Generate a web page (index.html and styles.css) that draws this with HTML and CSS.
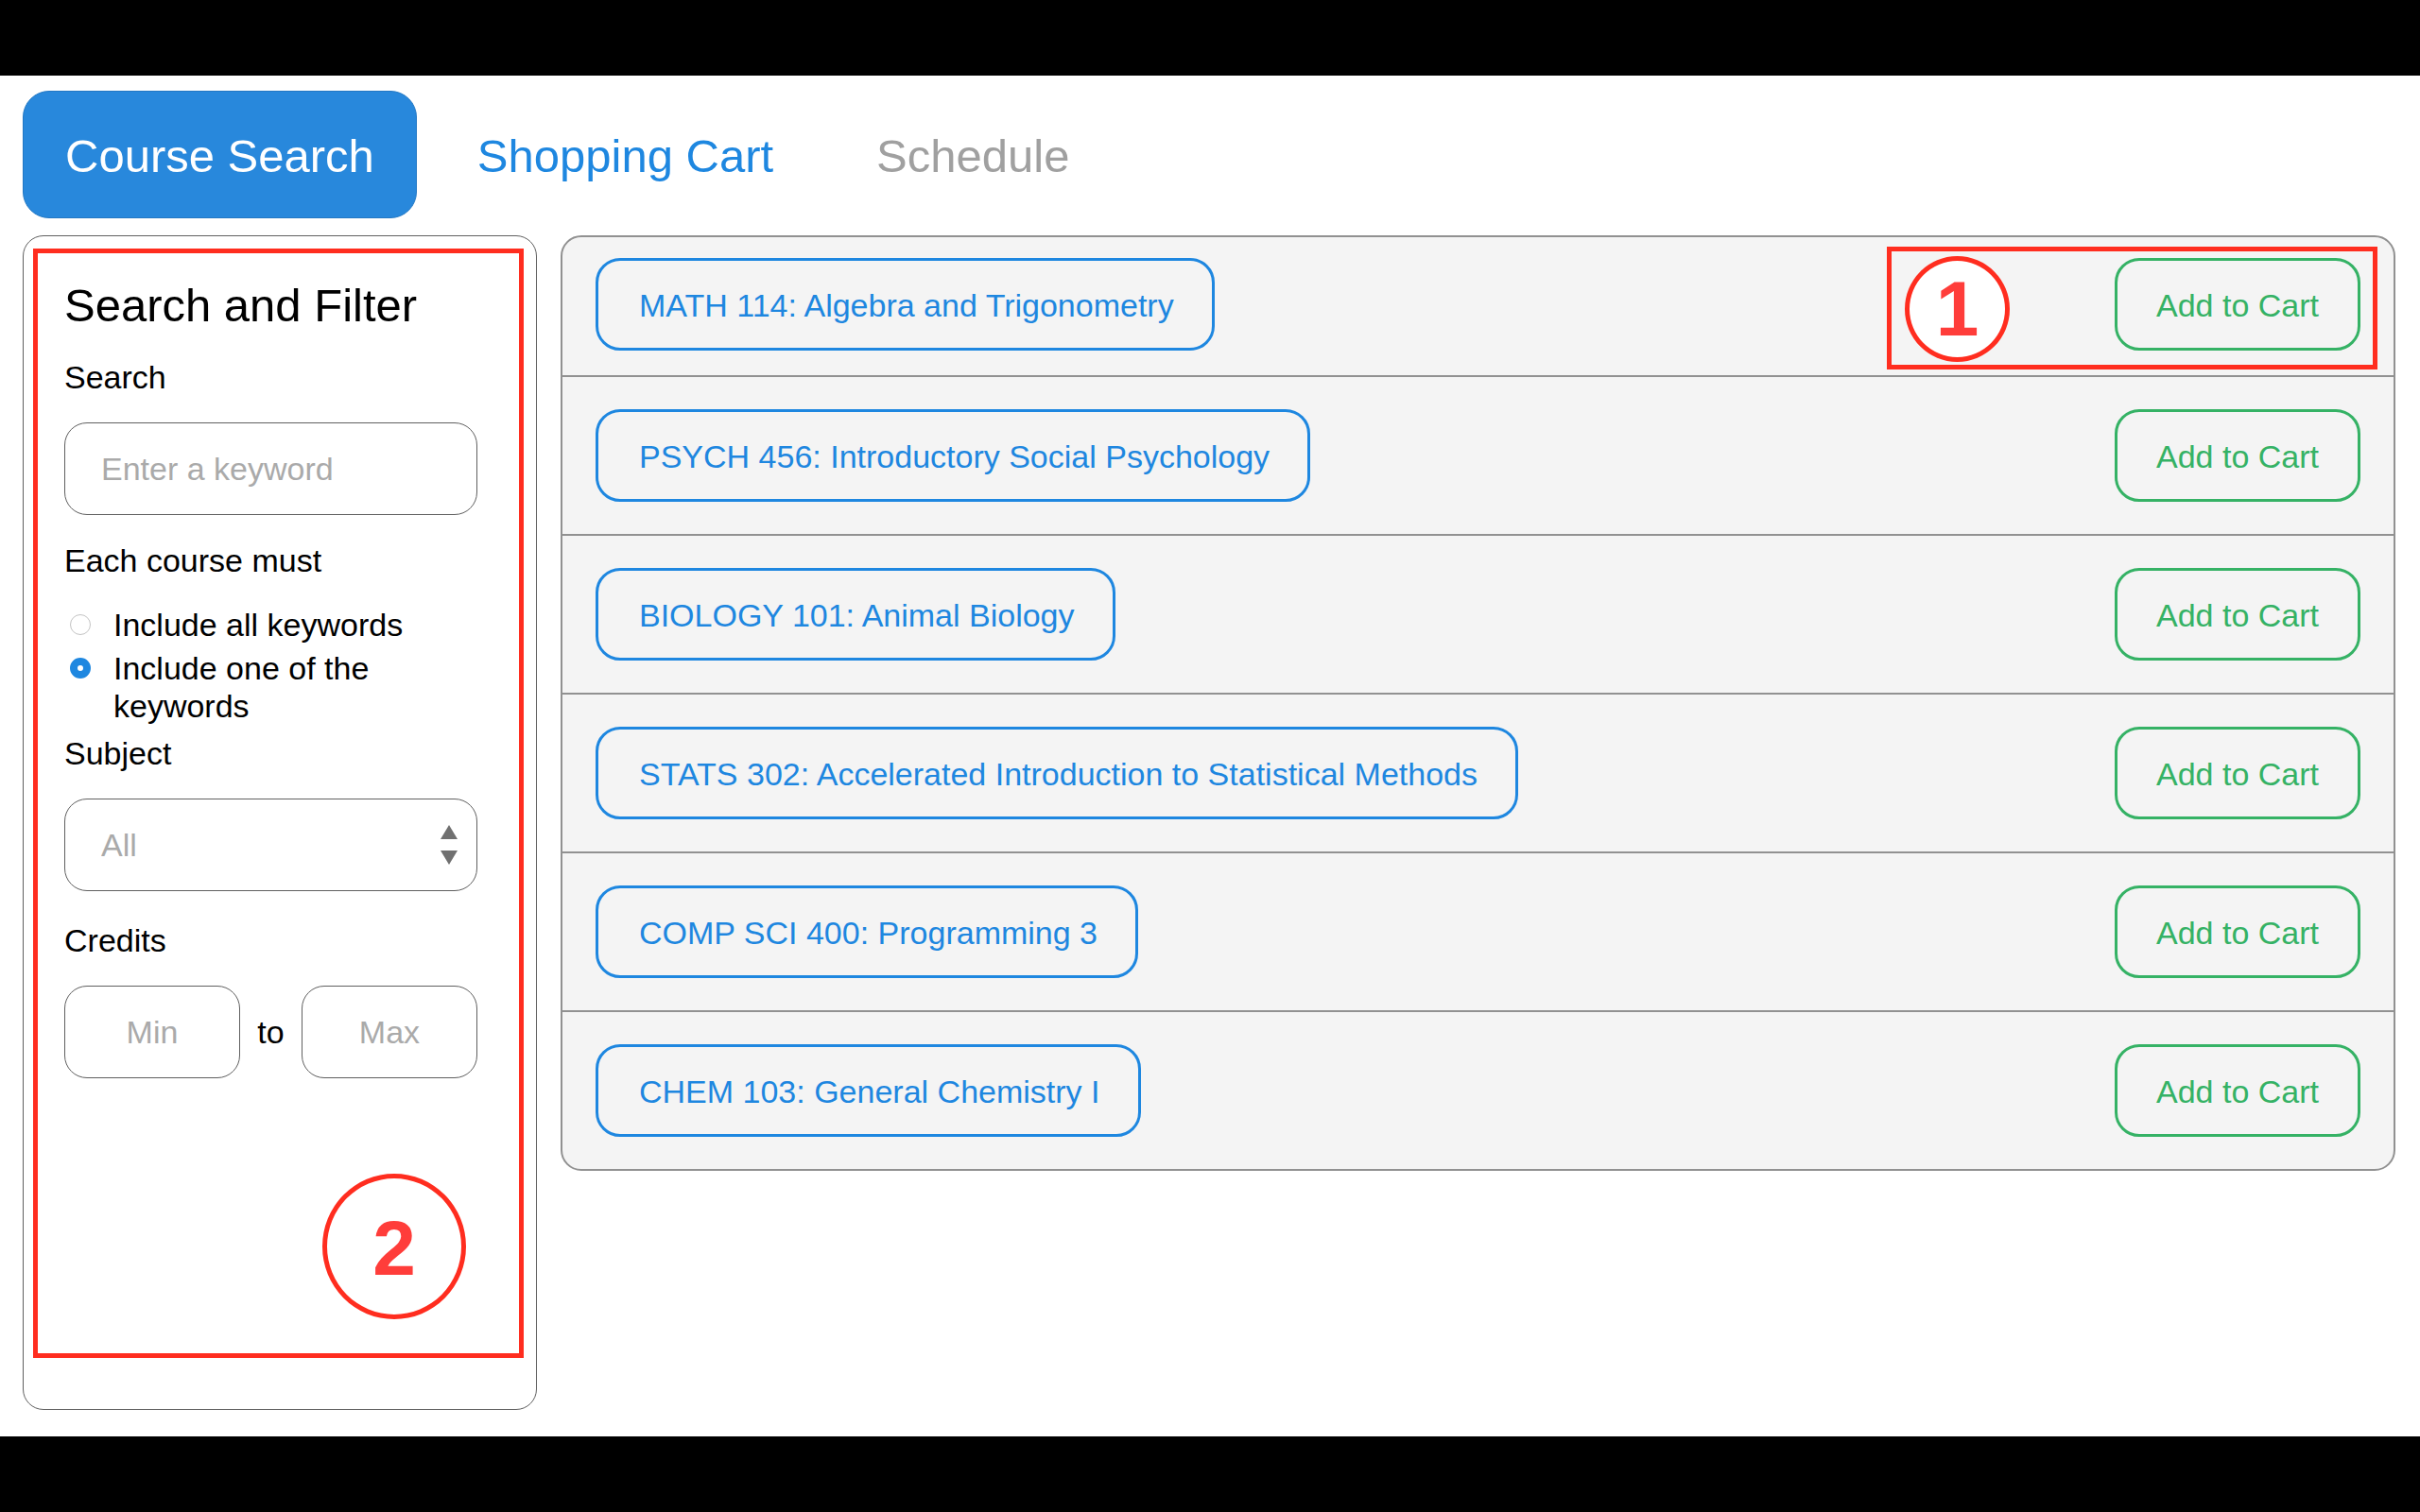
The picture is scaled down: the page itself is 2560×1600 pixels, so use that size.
FILE: index.html
```html
<!DOCTYPE html>
<html lang="en">
<head>
<meta charset="utf-8">
<title>Course Search</title>
<link rel="stylesheet" href="styles.css">
</head>
<body>
<div class="page">
  <nav class="tabs">
    <button class="tab tab-active" type="button">Course Search</button>
    <button class="tab" type="button">Shopping Cart</button>
    <button class="tab" type="button" disabled>Schedule</button>
  </nav>
  <main class="content">
    <form class="filters">
      <h2 class="filters-title">Search and Filter</h2>
      <label class="label" for="keyword">Search</label>
      <input class="field" id="keyword" type="text" placeholder="Enter a keyword">
      <fieldset class="match">
        <legend class="label">Each course must</legend>
        <label class="option"><input class="radio" type="radio" name="match"><span>Include all keywords</span></label>
        <label class="option"><input class="radio" type="radio" name="match" checked><span>Include one of the keywords</span></label>
      </fieldset>
      <label class="label" for="subject">Subject</label>
      <div class="select-wrap">
        <select class="field field-select" id="subject"><option>All</option></select>
        <svg class="select-arrows" viewBox="0 0 18 42" aria-hidden="true"><path d="M9 0 18 15H0ZM0 27H18L9 42Z"/></svg>
      </div>
      <label class="label label-credits" for="min">Credits</label>
      <div class="credits">
        <input class="field field-credit" id="min" type="text" placeholder="Min">
        <label for="max">to</label>
        <input class="field field-credit" id="max" type="text" placeholder="Max">
      </div>
      <div class="callout callout-filters"><span class="marker marker-large">2</span></div>
    </form>
    <ul class="courses">
      <li class="course course-first">
        <button class="btn" type="button">MATH 114: Algebra and Trigonometry</button>
        <button class="btn btn-add" type="button">Add to Cart</button>
        <div class="callout callout-add"><span class="marker">1</span></div>
      </li>
      <li class="course">
        <button class="btn" type="button">PSYCH 456: Introductory Social Psychology</button>
        <button class="btn btn-add" type="button">Add to Cart</button>
      </li>
      <li class="course">
        <button class="btn" type="button">BIOLOGY 101: Animal Biology</button>
        <button class="btn btn-add" type="button">Add to Cart</button>
      </li>
      <li class="course">
        <button class="btn" type="button">STATS 302: Accelerated Introduction to Statistical Methods</button>
        <button class="btn btn-add" type="button">Add to Cart</button>
      </li>
      <li class="course">
        <button class="btn" type="button">COMP SCI 400: Programming 3</button>
        <button class="btn btn-add" type="button">Add to Cart</button>
      </li>
      <li class="course">
        <button class="btn" type="button">CHEM 103: General Chemistry I</button>
        <button class="btn btn-add" type="button">Add to Cart</button>
      </li>
    </ul>
  </main>
</div>
</body>
</html>
```
FILE: styles.css
```css
* {
  box-sizing: border-box;
}

body {
  margin: 0;
  min-height: 100vh;
  padding: 80px 0;
  display: flex;
  flex-direction: column;
  background: #000;
  color: #000;
  font-family: "Liberation Sans", Arial, sans-serif;
  font-size: 34px;
  line-height: 40px;
}

button,
input,
select {
  margin: 0;
  font: inherit;
}

.page {
  flex: 1;
  display: flex;
  flex-direction: column;
  gap: 18px;
  padding: 16px 26px 28px 24px;
  background: #fff;
}

/* Navigation */

.tabs {
  display: flex;
  gap: 19px;
}

.tab {
  padding: 40px 44px 37px;
  border: 1px solid transparent;
  border-radius: 28px;
  background: none;
  color: #1e87e0;
  font-size: 49px;
  line-height: 56px;
}

.tab-active {
  background: #2888dc;
  border-color: #2378c4;
  color: #fff;
}

.tab:disabled {
  color: #a0a0a0;
}

.content {
  flex: 1;
  display: flex;
  gap: 25px;
}

/* Filters */

.filters {
  position: relative;
  flex: none;
  width: 544px;
  padding: 45px 62px 44px 43px;
  border: 1px solid #606060;
  border-radius: 22px;
}

.filters-title {
  margin: 0 0 28px;
  font-size: 49px;
  font-weight: 400;
  line-height: 56px;
}

.label {
  display: block;
  margin-bottom: 28px;
  padding: 0;
}

.label-credits {
  margin-top: 32px;
}

.field {
  display: block;
  width: 100%;
  height: 98px;
  padding: 0 38px;
  border: 1px solid #606060;
  border-radius: 24px;
  background: #fff;
  color: #aaa;
}

.field::placeholder {
  color: #aaa;
  opacity: 1;
}

.match {
  margin: 28px 0 10px;
  padding: 0;
  border: 0;
}

.option {
  display: flex;
  gap: 24px;
  padding-left: 6px;
}

.option + .option {
  margin-top: 6px;
}

.radio {
  flex: none;
  appearance: none;
  width: 22px;
  height: 22px;
  margin-top: 9px;
  border: 1px solid #c4c4c4;
  border-radius: 50%;
  background: #fff;
}

.radio:checked {
  border: 8px solid #1e87e0;
}

.select-wrap {
  position: relative;
}

.field-select {
  appearance: none;
}

.select-arrows {
  position: absolute;
  top: 28px;
  right: 21px;
  width: 18px;
  height: 42px;
  fill: #707070;
  pointer-events: none;
}

.credits {
  display: flex;
  align-items: center;
  justify-content: space-between;
}

.field-credit {
  width: 186px;
  padding: 0 20px;
  text-align: center;
}

/* Course list */

.courses {
  flex: 1;
  align-self: flex-start;
  margin: 0;
  padding: 0;
  list-style: none;
  background: #f4f4f4;
  border: 2px solid #919191;
  border-radius: 22px;
}

.course {
  position: relative;
  display: flex;
  align-items: center;
  justify-content: space-between;
  padding: 34px 35px;
}

.course-first {
  padding-top: 22px;
  padding-bottom: 26px;
}

.course + .course {
  border-top: 2px solid #919191;
}

.btn {
  height: 98px;
  padding: 2px 40px 0 43px;
  border: 3px solid #1e87e0;
  border-radius: 26px;
  background: none;
  color: #1e87e0;
}

.btn-add {
  width: 260px;
  padding: 2px 0 0;
  border-color: #35b265;
  color: #35b265;
}

/* Numbered callouts */

.callout {
  position: absolute;
  border: 5px solid #ff2d1f;
  pointer-events: none;
}

.callout-filters {
  inset: 13px 13px 54px 10px;
}

.callout-add {
  top: 10px;
  right: 17px;
  bottom: 6px;
  width: 519px;
}

.marker {
  position: absolute;
  top: 5px;
  left: 14px;
  display: flex;
  align-items: center;
  justify-content: center;
  width: 111px;
  height: 112px;
  border: 5px solid #ff2d1f;
  border-radius: 50%;
  background: #fff;
  color: #ff3d3a;
  font-size: 82px;
  font-weight: 700;
}

.marker-large {
  top: auto;
  left: auto;
  right: 56px;
  bottom: 36px;
  width: 152px;
  height: 154px;
  padding-top: 3px;
}
```
